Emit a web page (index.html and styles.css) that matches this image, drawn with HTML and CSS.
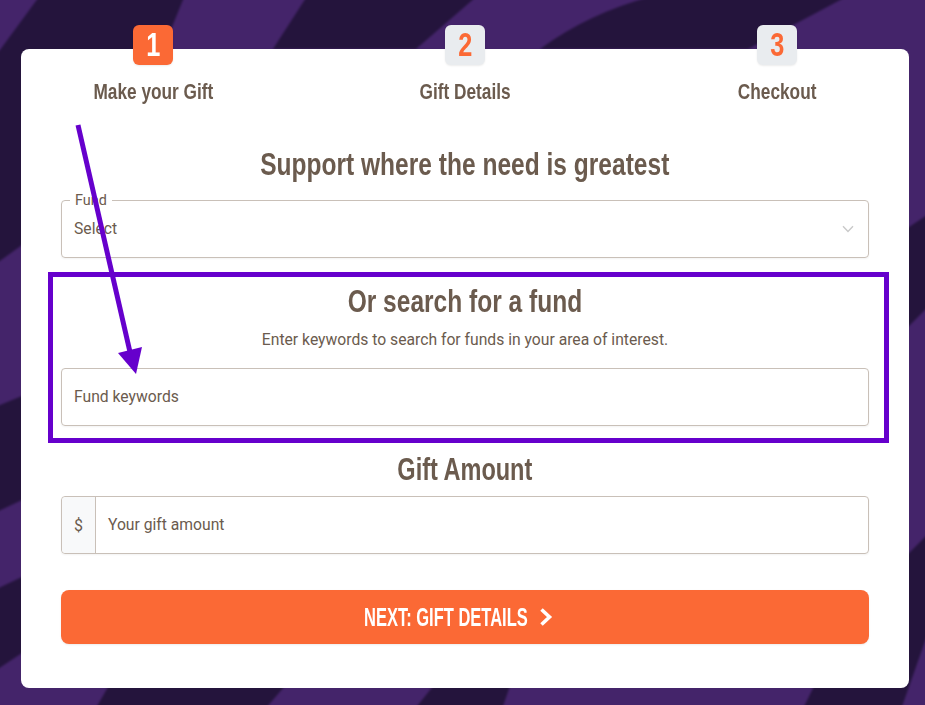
FILE: index.html
```html
<!DOCTYPE html>
<html lang="en">
<head>
<meta charset="utf-8">
<title>Make your Gift</title>
<link rel="stylesheet" href="styles.css">
</head>
<body>
<svg class="backdrop" viewBox="0 0 925 705" aria-hidden="true">
  <rect x="-10" y="-10" width="945" height="725" fill="#44246a"/>
  <g fill="#24143c">
    <polygon points="44,-10 187,-10 163,49 60,215 22,245 -10,268 -10,58 0,50"/>
    <polygon points="311,-10 484,-10 416,49 273,49"/>
    <path d="M680,-10 L859,-10 L748,49 L540,49 Q600,5 680,-10Z"/>
    <polygon points="935,210 935,300 909,326 880,340 880,240 909,227"/>
    <polygon points="-10,409 22,396 40,380 40,495 22,500 -10,515"/>
    <polygon points="-10,592 22,577 40,570 40,640 22,653 -10,674"/>
    <polygon points="935,527 935,613 899,715 800,715 817,680 890,570 909,553"/>
    <polygon points="112,680 290,680 260,715 92,715"/>
    <polygon points="438,680 512,680 500,715 410,715"/>
  </g>
</svg>
<main class="card">
  <ol class="steps">
    <li class="step"><span class="step-num is-current"><span class="squeeze">1</span></span><span class="step-label squeeze">Make your Gift</span></li>
    <li class="step"><span class="step-num"><span class="squeeze">2</span></span><span class="step-label squeeze">Gift Details</span></li>
    <li class="step"><span class="step-num"><span class="squeeze">3</span></span><span class="step-label squeeze">Checkout</span></li>
  </ol>
  <h2 class="heading heading-first"><span class="squeeze">Support where the need is greatest</span></h2>
  <div class="field field-select">
    <span class="float-label">Fund</span>
    <span class="field-text">Select</span>
    <svg class="chevron" width="12" height="8" viewBox="0 0 12 8" aria-hidden="true"><path d="M1 1.2 L6 6.4 L11 1.2" fill="none" stroke="#c9c9c9" stroke-width="1.4"/></svg>
  </div>
  <h2 class="heading heading-search"><span class="squeeze">Or search for a fund</span></h2>
  <p class="hint">Enter keywords to search for funds in your area of interest.</p>
  <div class="field"><span class="field-text">Fund keywords</span></div>
  <h2 class="heading heading-amount"><span class="squeeze squeeze-amount">Gift Amount</span></h2>
  <div class="field field-group">
    <span class="addon">$</span>
    <span class="field-text">Your gift amount</span>
  </div>
  <button class="next" type="button"><span class="next-text">NEXT: GIFT DETAILS</span>
    <svg class="next-icon" width="14" height="20" viewBox="0 0 14 20" aria-hidden="true"><path d="M2.5 2.5 L10.5 10 L2.5 17.5" fill="none" stroke="#fff" stroke-width="3.6"/></svg>
  </button>
</main>
<svg class="annotation" viewBox="0 0 925 705" aria-hidden="true">
  <rect x="50.5" y="274.5" width="836" height="166" fill="none" stroke="#6600cc" stroke-width="5"/>
  <line x1="78" y1="125" x2="130" y2="352" stroke="#6600cc" stroke-width="5"/>
  <polygon points="118,353 142,347 136,374" fill="#6600cc"/>
</svg>
</body>
</html>
```
FILE: styles.css
```css
* { box-sizing: border-box; }
html, body { margin: 0; height: 100%; }
body {
  position: relative;
  overflow: hidden;
  background: #44246a;
  padding: 49px 16px 0 21px;
  font-family: "Roboto", "Liberation Sans", sans-serif;
  font-size: 16px;
  color: #6b5b4e;
}
.backdrop, .annotation {
  position: absolute;
  left: 0;
  top: 0;
  width: 925px;
  height: 705px;
}
.backdrop { overflow: visible; filter: blur(1px); }
.annotation { pointer-events: none; }
.card {
  position: relative;
  display: flow-root;
  width: 888px;
  height: 639px;
  padding: 0 40px;
  background: #fff;
  border-radius: 8px;
}
.squeeze {
  display: inline-block;
  white-space: nowrap;
  transform: scaleX(.767);
}
.squeeze-amount { transform: scaleX(.735); }
.steps {
  display: flex;
  justify-content: space-between;
  list-style: none;
  margin: -24px 0 0;
  padding: 0 32px;
}
.step {
  width: 120px;
  display: flex;
  flex-direction: column;
  align-items: center;
}
.step-num {
  width: 40px;
  height: 40px;
  display: flex;
  align-items: center;
  justify-content: center;
  border-radius: 6px;
  background: #e9ecef;
  color: #fb6935;
  font: 700 33px/40px "Liberation Sans", sans-serif;
  box-shadow: 0 1px 2px rgba(0,0,0,.08);
}
.step-num.is-current { background: #fb6935; color: #fff; }
.step-label {
  margin-top: 12px;
  transform: scaleX(.784);
  font: 700 22px/30px "Liberation Sans", sans-serif;
}
.heading {
  margin: 0;
  text-align: center;
  font: 700 32px/40px "Liberation Sans", sans-serif;
}
.heading-first { margin: 37px 0 16px; }
.heading-search { margin: 23px 0 0; }
.heading-amount { margin: 23px 0 7px; }
.hint {
  margin: 8px 0 17px;
  text-align: center;
  font-size: 15.7px;
  line-height: 22px;
}
.field {
  position: relative;
  height: 58px;
  display: flex;
  align-items: center;
  padding: 0 12px;
  border: 1px solid #c9c0b8;
  border-radius: 4px;
  box-shadow: 0 1px 2px rgba(0,0,0,.05);
}
.field-text { font-size: 15.7px; margin-bottom: 2px; }
.float-label {
  position: absolute;
  left: 8px;
  top: -9px;
  padding: 0 5px;
  background: #fff;
  font-size: 14.4px;
  line-height: 17px;
}
.chevron { margin-left: auto; margin-right: 2px; }
.field-group { padding-left: 0; }
.addon {
  width: 34px;
  align-self: stretch;
  display: flex;
  align-items: center;
  justify-content: center;
  margin-right: 12px;
  background: #f8f9fa;
  border-right: 1px solid #c9c0b8;
  border-radius: 4px 0 0 4px;
}
.next {
  width: 100%;
  height: 54px;
  margin-top: 36px;
  padding: 0 13px 0 0;
  display: flex;
  align-items: center;
  justify-content: center;
  gap: 11px;
  border: 0;
  border-radius: 8px;
  background: #fb6935;
  color: #fff;
  font: 700 25px/30px "Liberation Sans", sans-serif;
  box-shadow: 0 1px 2px rgba(0,0,0,.08);
}
.next-text {
  display: inline-block;
  width: 164px;
  white-space: nowrap;
  transform: scaleX(.66);
  transform-origin: left center;
}
```
